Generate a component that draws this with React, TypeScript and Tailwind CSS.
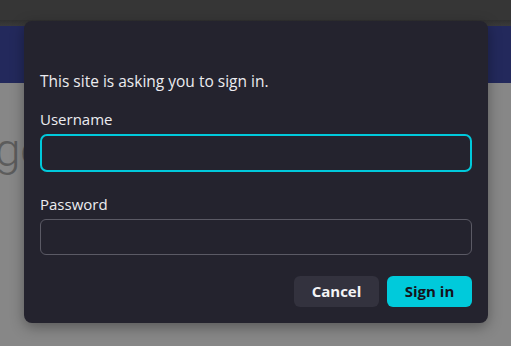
export default function App() {
  return (
    <div
      className="relative h-[346px] w-[511px] overflow-hidden bg-[#878787]"
      style={{ fontFamily: '"Open Sans", "Noto Sans", sans-serif' }}
    >
      {/* browser chrome + page header behind the modal */}
      <div className="h-[20px] bg-[#363636]" />
      <div className="h-[6px] bg-gradient-to-b from-[#303030] to-[#3a3a3a]" />
      <div className="h-[57px] bg-[#23295c]" />
      <div className="pt-[44px]">
        <div className="-ml-[5px] font-[family-name:Roboto,sans-serif] text-[46px] leading-[46px] font-light text-[#5c5c5c]">
          ge
        </div>
      </div>

      {/* sign-in dialog */}
      <div className="absolute left-[24px] top-[21px] flex h-[302px] w-[464px] flex-col rounded-[8px] bg-[#24232e] px-4 pt-[49px] shadow-[0_4px_14px_rgba(0,0,0,0.35)]">
        <p className="text-[15.5px] leading-[22px] text-[#ececf0]">This site is asking you to sign in.</p>

        <div className="mt-[16px] text-[15px] leading-[22px] text-[#ececf0]">Username</div>
        <div className="mt-[4px] h-[38px] rounded-[7px] border-2 border-[#00c9db]" />

        <div className="mt-[21px] text-[15px] leading-[22px] text-[#ececf0]">Password</div>
        <div className="mt-[4px] h-[36px] rounded-[6px] border border-[#5b5a65]" />

        <div className="mt-[21px] flex justify-end gap-2">
          <button className="h-[31px] w-[85px] rounded-[6px] bg-[#33323e] text-[15px] font-bold text-[#f4f4f6]">
            Cancel
          </button>
          <button className="h-[31px] w-[85px] rounded-[6px] bg-[#00cadb] text-[15px] font-bold text-[#15141c]">
            Sign in
          </button>
        </div>
      </div>
    </div>
  );
}
